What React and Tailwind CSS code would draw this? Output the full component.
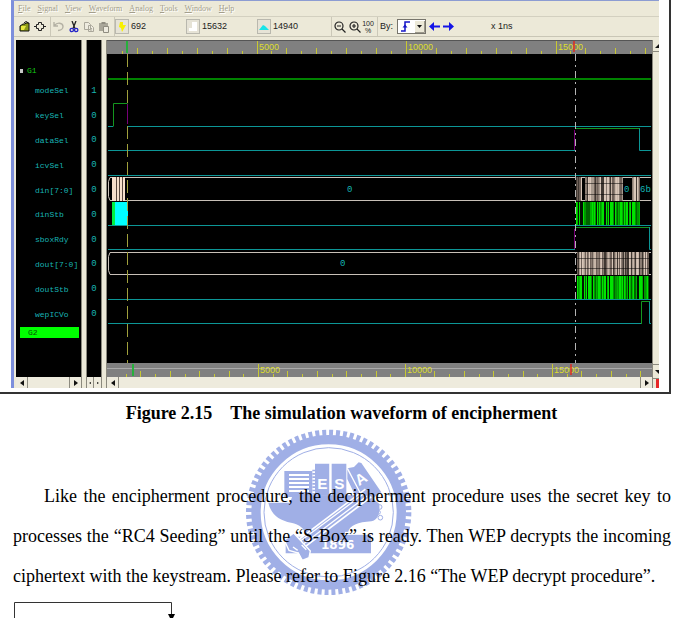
const SIGNALS = [
  { name: 'modeSel', value: '1' },
  { name: 'keySel', value: '0' },
  { name: 'dataSel', value: '0' },
  { name: 'icvSel', value: '0' },
  { name: 'din[7:0]', value: '0' },
  { name: 'dinStb', value: '0' },
  { name: 'sboxRdy', value: '0' },
  { name: 'dout[7:0]', value: '0' },
  { name: 'doutStb', value: '0' },
  { name: 'wepICVo', value: '0' },
]

const MENUS = ['File', 'Signal', 'View', 'Waveform', 'Analog', 'Tools', 'Window', 'Help']

const BLUE = '#a0afe6'

// Irregular stripes for a busy bus or strobe, repeatable for a given seed
function stripes(from, to, seed, colors) {
  const out = []
  let s = seed
  for (let x = from; x < to; x += 1) {
    s = (s * 73 + 41) % 1009
    out.push({ x, color: colors[s % colors.length] })
  }
  return out
}

function MenuBar() {
  return (
    <nav className="flex h-4 items-center gap-[7px] border-b border-[#d3d0c0] pl-1 font-['Liberation_Serif',serif] text-[8px] leading-none text-[#a39e8c]">
      {MENUS.map((m) => (
        <button key={m} type="button" className="[text-shadow:1px_1px_0_#fff]">
          <span className="underline">{m[0]}</span>
          {m.slice(1)}
        </button>
      ))}
    </nav>
  )
}

function Divider() {
  return <span className="ml-[3px] h-full w-px shrink-0 bg-[#cbc8b8]" />
}

function ToolButton({ label, children }) {
  return (
    <button type="button" aria-label={label} className="flex h-4 w-[15px] shrink-0 items-center justify-center">
      {children}
    </button>
  )
}

function Marker({ label, value, children }) {
  return (
    <div className="flex w-[71px] shrink-0 items-center gap-0.5">
      <button
        type="button"
        aria-label={label}
        className="flex h-[15px] w-[14px] shrink-0 items-center justify-center border border-[#b9b8ae] bg-[#e6e3d6]"
      >
        {children}
      </button>
      <span>{value}</span>
    </div>
  )
}

function ToolBar() {
  return (
    <div className="flex h-5 items-center border-b border-[#c9c6b6] pl-[3px] font-['Liberation_Sans',sans-serif] text-[9px] leading-none text-[#222]">
      <ToolButton label="Open">
        <svg width="12" height="11" viewBox="0 0 12 11">
          <path d="M1 10V5l3-2h2l1-1h3v8z" fill="#8c9a18" stroke="#111" />
          <path d="M5 2l2-1.500L9.500 2" fill="none" stroke="#111" />
          <path d="M2 5h5l-2 4H2z" fill="#e6e840" />
        </svg>
      </ToolButton>
      <ToolButton label="Signals">
        <svg width="12" height="11" viewBox="0 0 12 11">
          <path d="M0 5.500h2.500M9.500 5.500H12M2.500 5.500v-2h2v-2h3v2h2v4h-2v2h-3v-2h-2z" fill="none" stroke="#222" />
        </svg>
      </ToolButton>
      <Divider />
      <ToolButton label="Undo">
        <svg width="12" height="11" viewBox="0 0 12 11">
          <path d="M1 1v4h4M1.500 4.500C4 1 10 1.500 10 5.500c0 2-2 4-5 4" fill="none" stroke="#b4b1a4" strokeWidth="1.400" />
        </svg>
      </ToolButton>
      <ToolButton label="Cut">
        <svg width="10" height="12" viewBox="0 0 10 12">
          <path d="M3 0l3 7.500M7 0L4 7.500" stroke="#222" strokeWidth="1.300" />
          <circle cx="2.800" cy="9" r="1.700" fill="none" stroke="#2424c8" strokeWidth="1.300" />
          <circle cx="7.200" cy="9" r="1.700" fill="none" stroke="#2424c8" strokeWidth="1.300" />
        </svg>
      </ToolButton>
      <ToolButton label="Copy">
        <svg width="12" height="12" viewBox="0 0 12 12" fill="#eeebdf" stroke="#aaa79a">
          <path d="M1.500 1.500h4l2 2v5h-6zM5.500 4.500h3l2 2v4h-5z" />
          <path d="M7 7.500h2M7 9h2" />
        </svg>
      </ToolButton>
      <ToolButton label="Paste">
        <svg width="12" height="12" viewBox="0 0 12 12">
          <path d="M1 2h9v8H1z" fill="#aaa79a" />
          <path d="M3.500 1h4v2h-4z" fill="#8f8c80" />
          <path d="M5.500 5.500h5v6h-5z" fill="#eeebdf" stroke="#8f8c80" />
        </svg>
      </ToolButton>
      <Divider />
      <Marker label="Cursor" value="692">
        <svg width="10" height="12" viewBox="0 0 10 12">
          <path d="M3 1h3v3h3L5 11 4 7 2 6z" fill="#f8f000" />
        </svg>
      </Marker>
      <Marker label="Baseline" value="15632">
        <svg width="10" height="12" viewBox="0 0 10 12">
          <path d="M4 1h5v9H1V7h3z" fill="#fff" />
        </svg>
      </Marker>
      <Marker label="Delta" value="14940">
        <svg width="10" height="10" viewBox="0 0 10 10">
          <path d="M0 8l4-5 2 1 4 4z" fill="#19e4e8" />
        </svg>
      </Marker>
      <Divider />
      <ToolButton label="Zoom out">
        <svg width="12" height="12" viewBox="0 0 12 12" fill="none" stroke="#222" strokeWidth="1.200">
          <circle cx="5" cy="5" r="4" />
          <path d="M3 5h4M8 8l3.500 3.500" />
        </svg>
      </ToolButton>
      <ToolButton label="Zoom in">
        <svg width="12" height="12" viewBox="0 0 12 12" fill="none" stroke="#222" strokeWidth="1.200">
          <circle cx="5" cy="5" r="4" />
          <path d="M3 5h4M5 3v4M8 8l3.500 3.500" />
        </svg>
      </ToolButton>
      <button type="button" className="flex w-3 shrink-0 flex-col items-center text-[7px] leading-[7px]">
        <span>100</span>
        <span>%</span>
      </button>
      <Divider />
      <label htmlFor="step-by" className="ml-0.5 shrink-0">By:</label>
      <div className="relative ml-1 h-[15px] w-[29px] shrink-0">
        <select
          id="step-by"
          className="h-full w-full appearance-none border border-[#77756c] bg-white text-transparent"
          defaultValue="edge"
        >
          <option value="edge" />
        </select>
        <svg className="pointer-events-none absolute inset-0" width="29" height="15" viewBox="0 0 29 15">
          <path d="M4 12h4V3h5" fill="none" stroke="#1616c8" strokeWidth="1.500" />
          <path d="M5.500 8.500L8 5.500l2.500 3z" fill="#1616c8" />
          <path d="M18 2h9v11h-9z" fill="#ece9d8" />
          <path d="M18 13.500h9.500V2" fill="none" stroke="#9a978a" />
          <path d="M20 6h5l-2.500 3z" fill="#111" />
        </svg>
      </div>
      <button type="button" aria-label="Previous" className="ml-[3px] shrink-0">
        <svg width="12" height="9" viewBox="0 0 12 9">
          <path d="M0 4.500L5 0v3.500h6v2H5V9z" fill="#1414e6" />
        </svg>
      </button>
      <button type="button" aria-label="Next" className="ml-0.5 shrink-0">
        <svg width="12" height="9" viewBox="0 0 12 9">
          <path d="M11 4.500L6 0v3.500H0v2h6V9z" fill="#1414e6" />
        </svg>
      </button>
      <span className="ml-9 shrink-0">x 1ns</span>
    </div>
  )
}

function HScroll({ small }) {
  const btn = small ? 'w-1/2' : 'w-3'
  return (
    <div className="flex h-[11px] justify-between bg-[#eeebdd]">
      <button type="button" aria-label="Scroll left" className={`flex items-center justify-center border-r border-[#8d8b80] ${btn}`}>
        <svg width="4" height="6" viewBox="0 0 4 6">
          <path d={small ? 'M1 3l2-1v2z' : 'M0 3l4-3v6z'} fill="#111" />
        </svg>
      </button>
      <button type="button" aria-label="Scroll right" className={`flex items-center justify-center ${btn} ${small ? '' : 'border-l border-[#8d8b80]'}`}>
        <svg width="4" height="6" viewBox="0 0 4 6">
          <path d={small ? 'M3 3L1 2v2z' : 'M4 3L0 0v6z'} fill="#111" />
        </svg>
      </button>
    </div>
  )
}

function Splitter() {
  return <div className="w-[6px] shrink-0 border-x border-[#8b897e] bg-[#ece9d8]" />
}

// One tick every 500ns, a labelled one every 5000ns
function Ruler({ origin, pitch, cursor, baseline, seam }) {
  const ticks = []
  for (let i = 1; origin + (i * pitch) / 2 < 544; i += 1) ticks.push(i)
  return (
    <svg className="block h-[14px] w-full bg-[#808080]" viewBox="0 0 545 14" preserveAspectRatio="xMinYMin meet">
      {seam ? <path d="M0 5.500h545" stroke="#aaa" /> : <path d="M0 .5h545" stroke="#555" />}
      {ticks.map((i) => {
        const x = Math.round(origin + (i * pitch) / 2) + 0.5
        const top = i % 10 === 0 ? 1 : i % 2 === 0 ? 8 : 11
        return <path key={i} d={`M${x} ${top}V14`} stroke="#c8c832" />
      })}
      {[5, 10, 15].map((k) => (
        <text
          key={k}
          x={Math.round(origin + k * pitch) + 2}
          y="10"
          fill="#dede2c"
          className="font-['Liberation_Sans',sans-serif] text-[9px]"
        >
          {k * 1000}
        </text>
      ))}
      <path d={`M${cursor} 1V13`} stroke="#26b03c" strokeWidth="2" />
      <path d={`M${baseline} 1V12`} stroke="#e02a20" strokeWidth="1.500" />
    </svg>
  )
}

function Stripes({ items, y, height }) {
  return items.map((s) => <rect key={s.x} x={s.x} y={y} width="1" height={height} fill={s.color} />)
}

const STROBE = ['#00e400', '#00b400', '#00e400', '#006400', '#031003', '#009600']
const BUS = ['#d8c6b8', '#6e6058', '#a89a8e', '#403832', '#8a7c72', '#c8b6a8']

function Waves() {
  return (
    <svg
      className="block h-[309px] w-full bg-black"
      viewBox="107 54 545 309"
      preserveAspectRatio="xMinYMin meet"
      fill="none"
    >
      <path d="M108 79H651" stroke="#008200" strokeWidth="2" />

      {/* single bit signals */}
      <g stroke="#0c9696">
        <path d="M108 126.500h5M127.500 126.500H651" />
        <path d="M108 150.500h467M639.500 128v22.500H651" />
        <path d="M108 175.500H651" />
        <path d="M108 225.500H651" />
        <path d="M108 249.500h467M649.500 227v22.500H651" />
        <path d="M108 299.500H651" />
        <path d="M108 323.500h533M649.500 301v22.500H651" />
      </g>
      <g stroke="#14961e">
        <path d="M113.500 126.500v-23h14" />
        <path d="M575 128.500h64.500" />
        <path d="M575 227.500h74" />
        <path d="M641.500 324v-22.500h8" />
      </g>

      {/* buses */}
      <g stroke="#c8c0b8">
        <path d="M577 177.500H110l-1.500 4v15l1.500 4H577M577 177.500h74M577 200.500h74" />
        <path d="M651 252.500H110l-1.500 4v14l1.500 4H651" />
      </g>
      <path d="M112 177h13v24h-13z" fill="#f6dfca" />
      <path d="M116.500 177v24M119.500 177v24M122.500 177v24" stroke="#5a4a40" />
      <Stripes items={stripes(576, 582, 17, BUS)} y={177} height={24} />
      <Stripes items={stripes(585, 623, 5, BUS)} y={177} height={24} />
      <Stripes items={stripes(632, 640, 11, BUS)} y={177} height={24} />
      <Stripes items={stripes(577, 649, 8, BUS)} y={252} height={23} />
      <path d="M585 183.500h38M585 194.500h38M577 258.500h72M577 268.500h72" stroke="#000" strokeOpacity=".5" />

      {/* strobes */}
      <path d="M112 202h3v23h-3z" fill="#00f040" />
      <path d="M115 202h13v23h-13z" fill="#00ffff" />
      <Stripes items={stripes(576, 640, 3, STROBE)} y={202} height={23} />
      <Stripes items={stripes(577, 649, 9, STROBE)} y={276} height={23} />

      {/* cursors */}
      <path d="M127.500 54V363" stroke="#a0a03c" strokeDasharray="13 5" />
      <path d="M575.500 54V363" stroke="#b4b4b4" strokeDasharray="7 4 2 4" />
      <path d="M127.500 104v20M574.500 130v20M574.500 229v20" stroke="#780078" />

      <g className="font-['Liberation_Mono',monospace] text-[9px]" fill="#14b4b4">
        <text x="347" y="192">0</text>
        <text x="340" y="266">0</text>
        <text x="624" y="192">0</text>
        <text x="640" y="192">6b</text>
      </g>
    </svg>
  )
}

function Viewer() {
  return (
    <div className="flex flex-1 pt-[3px] pl-0.5 font-['Liberation_Mono',monospace] text-[8px] leading-none text-[#18b4b4]">
      <div className="flex w-[65px] shrink-0 flex-col justify-between">
        <div className="flex-1 bg-black pr-0.5 pl-1">
          <div className="flex h-[39px] items-end gap-1 pb-1 text-[#14c814]">
            <span className="mb-0.5 h-1 w-[3px] bg-[#c8c8c8]" />
            G1
          </div>
          <ul className="grid h-[248px] grid-rows-10 pl-[15px]">
            {SIGNALS.map((s) => (
              <li key={s.name} className="flex items-center">{s.name}</li>
            ))}
          </ul>
          <div className="flex h-[11px] items-center bg-[#00ff00] pl-2 text-[#045004]">G2</div>
        </div>
        <HScroll />
      </div>
      <Splitter />
      <div className="flex w-[14px] shrink-0 flex-col">
        <div className="flex-1 bg-black pt-[39px]">
          <ul className="grid h-[248px] grid-rows-10 text-[9px]">
            {SIGNALS.map((s) => (
              <li key={s.name} className="flex items-center justify-center">{s.value}</li>
            ))}
          </ul>
        </div>
        <HScroll small />
      </div>
      <Splitter />
      <div className="min-w-0 flex-1">
        <Ruler origin={0} pitch={29.9} cursor={20} baseline={467} />
        <Waves />
        <Ruler origin={4} pitch={29.4} cursor={26} baseline={464} seam />
        <HScroll />
      </div>
      <div className="flex w-[7px] shrink-0 flex-col justify-between border-l border-[#8b897e] bg-[#ece9d8]">
        <button type="button" aria-label="Scroll up" className="h-3 border-b border-[#8b897e] pl-0.5">
          <svg width="4" height="4" viewBox="0 0 4 4"><path d="M4 0v4H0z" fill="#111" /></svg>
        </button>
        <div>
          <button type="button" aria-label="Scroll down" className="block h-[15px] border-y border-[#8b897e] pl-0.5">
            <svg width="4" height="4" viewBox="0 0 4 4"><path d="M0 0h4v4z" fill="#111" /></svg>
          </button>
          <div className="ml-[3px] h-[9px] w-[3px] bg-[#e62828]" />
        </div>
      </div>
    </div>
  )
}

// University seal: toothed wheel with an anvil, books and hammer
function Seal() {
  return (
    <svg className="absolute top-0 left-1/2 -ml-[102px]" width="225" height="180" viewBox="0 0 675 540" aria-hidden="true">
      <g fill="none" stroke={BLUE}>
        <circle cx="281" cy="262" r="239" strokeWidth="18" pathLength="144" strokeDasharray="1.150 .85" />
        <circle cx="281" cy="262" r="218" strokeWidth="28" />
        <circle cx="281" cy="262" r="194" strokeWidth="3" />
      </g>
      <g fill={BLUE}>
        <path d="M148 138h84v78h-84z" />
        <path d="M240 116h43v96h-43zM290 116h44v96h-44z" />
        <path d="M337 130l20-4 14-14 8 2 60 88-46 32-26-8-30-64z" />
        <path d="M100 233h65l8-22h230l30 26c2 30-4 48-24 52-40 2-66 12-70 34h69v62H152v-50h58c2-24-14-36-42-42-34-6-60-24-68-60z" />
      </g>
      <path d="M162 150h60M162 162h60M162 174h60M162 186h60M162 198h60" stroke="#fff" strokeWidth="6" />
      <path d="M236 134v76" stroke={BLUE} strokeWidth="8" strokeDasharray="5 5" />
      <path d="M286 116v92M337 130l42 80" stroke="#fff" strokeWidth="4" />
      <path d="M330 325h86" stroke="#fff" strokeWidth="9" />
      {/* hammer */}
      <path d="M400 204L196 358" stroke="#fff" strokeWidth="34" />
      <path d="M402 202L196 358" stroke={BLUE} strokeWidth="24" />
      <path d="M396 213L200 361M388 205L192 351" stroke="#fff" strokeWidth="4" />
      <path d="M148 346l28-22 50 54-4 20-20 8-12-22-28-8z" fill={BLUE} stroke="#fff" strokeWidth="4" />
      <path d="M174 366l14 10M188 382l8 16M200 360l14 14" stroke="#fff" strokeWidth="4" />
      <g fill="none" stroke={BLUE} strokeWidth="3">
        <circle cx="434" cy="246" r="7" />
        <circle cx="430" cy="262" r="6" />
        <circle cx="436" cy="278" r="7" />
      </g>
      <g fill="#fff" fontFamily="Liberation Sans, sans-serif" fontWeight="bold">
        <text x="247" y="192" fontSize="46">E</text>
        <text x="298" y="192" fontSize="46">S</text>
        <text x="0" y="0" fontSize="46" transform="translate(372 184) rotate(-32)">A</text>
        <text x="258" y="373" fontSize="36" fontFamily="DejaVu Sans, sans-serif">1896</text>
      </g>
    </svg>
  )
}

export default function App() {
  return (
    <main className="h-screen overflow-hidden bg-white text-black">
      <figure>
        <div className="mr-0.5 border-r-2 border-b-2 border-[#333] pr-2.5 pb-1 pl-[11px]">
          <div className="flex flex-col border-t border-l-3 border-t-[#8c9cd2] border-l-[#7d8fdc] bg-[#ece9d8]">
            <MenuBar />
            <ToolBar />
            <Viewer />
          </div>
        </div>
        <figcaption className="mt-[7px] pl-2.5 text-center font-['Liberation_Serif',serif] text-[18px] leading-6 font-bold">
          Figure 2.15<span className="inline-block w-[18px]" />The simulation waveform of encipherment
        </figcaption>
      </figure>

      <section className="relative pt-[51px]">
        <Seal />
        <p className="relative mr-0.5 ml-[13px] text-justify indent-[31px] font-['Liberation_Serif',serif] text-[18px] leading-10">
          Like the encipherment procedure, the decipherment procedure uses the secret key to processes the “RC4
          Seeding” until the “S-Box” is ready. Then WEP decrypts the incoming ciphertext with the keystream. Please
          refer to Figure 2.16 “The WEP decrypt procedure”.
        </p>
      </section>

      <svg className="mt-1.5 ml-[13px] block" width="170" height="20" viewBox="0 0 170 20">
        <path d="M1.500 20V.5h157V14" fill="none" stroke="#333" />
        <path d="M155 12h7l-3.500 7z" fill="#000" />
      </svg>
    </main>
  )
}
